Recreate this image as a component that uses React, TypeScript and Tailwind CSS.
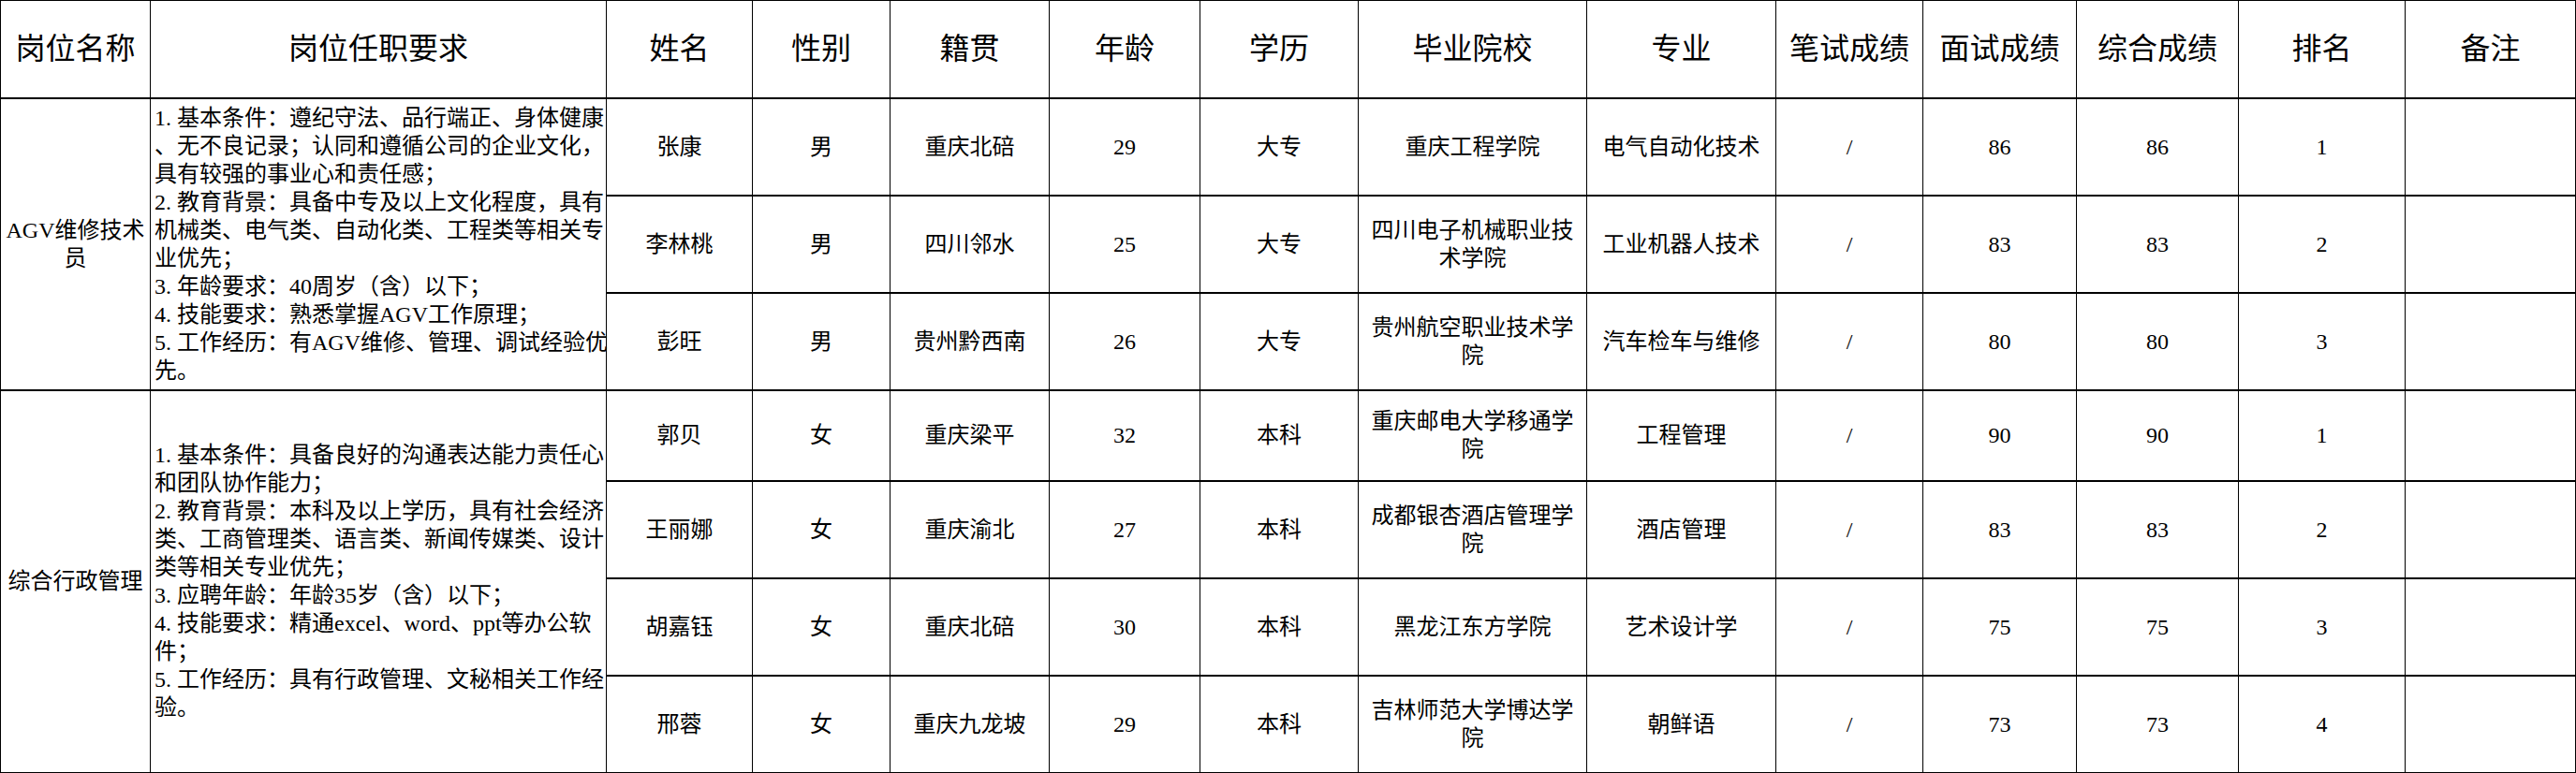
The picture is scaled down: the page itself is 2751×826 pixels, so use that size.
const COLS = [
  "w-[160px]",
  "w-[487px]",
  "w-[156px]",
  "w-[147px]",
  "w-[170px]",
  "w-[161px]",
  "w-[169px]",
  "w-[244px]",
  "w-[202px]",
  "w-[157px]",
  "w-[164px]",
  "w-[173px]",
  "w-[178px]",
  "w-[182px]",
];

const HEADERS = [
  "岗位名称",
  "岗位任职要求",
  "姓名",
  "性别",
  "籍贯",
  "年龄",
  "学历",
  "毕业院校",
  "专业",
  "笔试成绩",
  "面试成绩",
  "综合成绩",
  "排名",
  "备注",
];

type Person = {
  name: string;
  sex: string;
  origin: string;
  age: string;
  edu: string;
  school: string;
  major: string;
  written: string;
  interview: string;
  total: string;
  rank: string;
  note: string;
};

type Group = {
  title: string[];
  lines: string[];
  people: Person[];
};

const p = (
  name: string,
  sex: string,
  origin: string,
  age: string,
  edu: string,
  school: string,
  major: string,
  interview: string,
  rank: string
): Person => ({
  name,
  sex,
  origin,
  age,
  edu,
  school,
  major,
  written: "/",
  interview,
  total: interview,
  rank,
  note: "",
});

const GROUPS: Group[] = [
  {
    title: ["AGV维修技术", "员"],
    lines: [
      "1.基本条件：遵纪守法、品行端正、身体健康",
      "、无不良记录；认同和遵循公司的企业文化，",
      "具有较强的事业心和责任感；",
      "2.教育背景：具备中专及以上文化程度，具有",
      "机械类、电气类、自动化类、工程类等相关专",
      "业优先；",
      "3.年龄要求：40周岁（含）以下；",
      "4.技能要求：熟悉掌握AGV工作原理；",
      "5.工作经历：有AGV维修、管理、调试经验优",
      "先。",
    ],
    people: [
      p("张康", "男", "重庆北碚", "29", "大专", "重庆工程学院", "电气自动化技术", "86", "1"),
      p("李林桃", "男", "四川邻水", "25", "大专", "四川电子机械职业技术学院", "工业机器人技术", "83", "2"),
      p("彭旺", "男", "贵州黔西南", "26", "大专", "贵州航空职业技术学院", "汽车检车与维修", "80", "3"),
    ],
  },
  {
    title: ["综合行政管理"],
    lines: [
      "1.基本条件：具备良好的沟通表达能力责任心",
      "和团队协作能力；",
      "2.教育背景：本科及以上学历，具有社会经济",
      "类、工商管理类、语言类、新闻传媒类、设计",
      "类等相关专业优先；",
      "3.应聘年龄：年龄35岁（含）以下；",
      "4.技能要求：精通excel、word、ppt等办公软",
      "件；",
      "5.工作经历：具有行政管理、文秘相关工作经",
      "验。",
    ],
    people: [
      p("郭贝", "女", "重庆梁平", "32", "本科", "重庆邮电大学移通学院", "工程管理", "90", "1"),
      p("王丽娜", "女", "重庆渝北", "27", "本科", "成都银杏酒店管理学院", "酒店管理", "83", "2"),
      p("胡嘉钰", "女", "重庆北碚", "30", "本科", "黑龙江东方学院", "艺术设计学", "75", "3"),
      p("邢蓉", "女", "重庆九龙坡", "29", "本科", "吉林师范大学博达学院", "朝鲜语", "73", "4"),
    ],
  },
];

const cell = "border-x border-y-2 border-black align-middle";
const dataCell = `${cell} text-center px-1 text-[24px] leading-[30px]`;

// numbered lines: "1." takes a full em like the original's half-width font
function ReqLine({ line }: { line: string }) {
  const m = line.match(/^(\d\.)(.*)$/);
  if (!m) return <div className="whitespace-nowrap">{line}</div>;
  return (
    <div className="whitespace-nowrap">
      <span className="inline-block w-[24px]">{m[1]}</span>
      {m[2]}
    </div>
  );
}

export default function App() {
  return (
    <div
      className="bg-white text-black w-[2751px] h-[826px] overflow-hidden"
      style={{ fontFamily: '"Liberation Serif", "Noto Sans CJK SC", serif' }}
    >
      <table className="table-fixed border-collapse w-[2750px]">
        <colgroup>
          {COLS.map((w, i) => (
            <col key={i} className={w} />
          ))}
        </colgroup>
        <thead>
          <tr className="h-[104px]">
            {HEADERS.map((h) => (
              <th
                key={h}
                className={`${cell} border-t text-center font-normal text-[32px] leading-[40px] whitespace-nowrap`}
              >
                {h}
              </th>
            ))}
          </tr>
        </thead>
        <tbody>
          {GROUPS.map((g, gi) =>
            g.people.map((person, pi) => (
              <tr
                key={`${gi}-${pi}`}
                className={gi === 1 && pi === 0 ? "h-[97px]" : "h-[104px]"}
              >
                {pi === 0 && (
                  <>
                    <td rowSpan={g.people.length} className={dataCell}>
                      {g.title.map((t) => (
                        <div key={t} className="whitespace-nowrap">
                          {t}
                        </div>
                      ))}
                    </td>
                    <td
                      rowSpan={g.people.length}
                      className={`${cell} text-left pl-1 text-[24px] leading-[30px]`}
                    >
                      {g.lines.map((line, li) => (
                        <ReqLine key={li} line={line} />
                      ))}
                    </td>
                  </>
                )}
                <td className={dataCell}>{person.name}</td>
                <td className={dataCell}>{person.sex}</td>
                <td className={dataCell}>{person.origin}</td>
                <td className={dataCell}>{person.age}</td>
                <td className={dataCell}>{person.edu}</td>
                <td className={dataCell}>{person.school}</td>
                <td className={dataCell}>{person.major}</td>
                <td className={dataCell}>{person.written}</td>
                <td className={dataCell}>{person.interview}</td>
                <td className={dataCell}>{person.total}</td>
                <td className={dataCell}>{person.rank}</td>
                <td className={dataCell}>{person.note}</td>
              </tr>
            ))
          )}
        </tbody>
      </table>
    </div>
  );
}
